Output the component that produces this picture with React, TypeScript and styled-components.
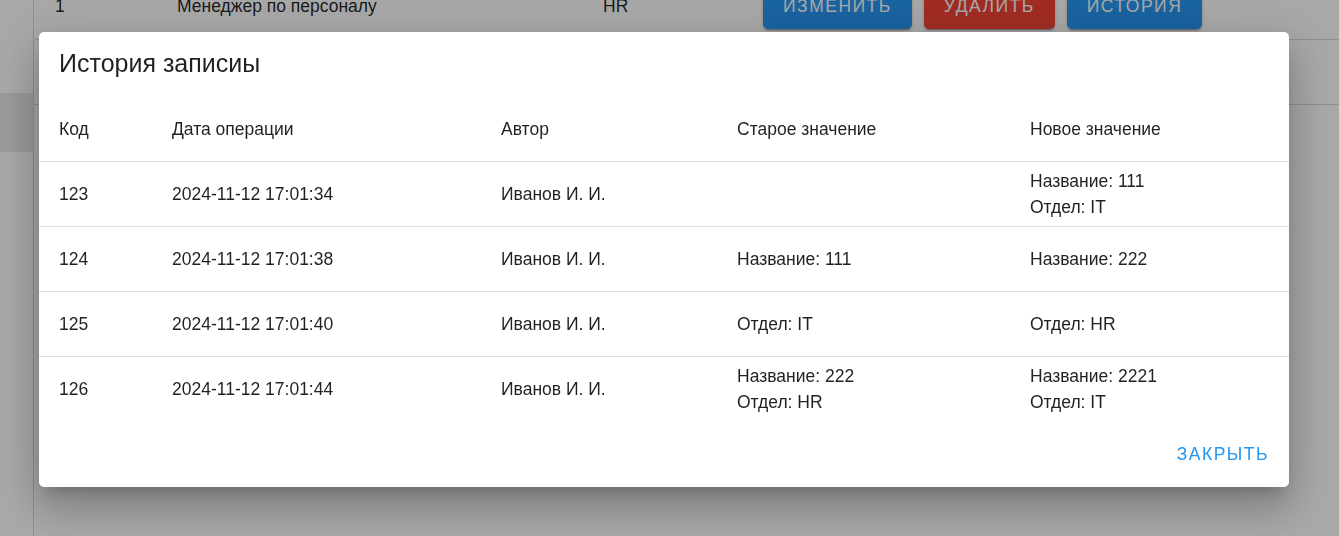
import React from 'react'
import styled, { createGlobalStyle } from 'styled-components'

const GlobalStyle = createGlobalStyle`
  html, body {
    margin: 0;
    padding: 0;
    overflow: hidden;
    background: #ffffff;
    font-family: "Liberation Sans", Arial, sans-serif;
  }
`

type Record = {
  id: number
  date: string
  author: string
  before: string[]
  after: string[]
}

const history: Record[] = [
  { id: 123, date: '2024-11-12 17:01:34', author: 'Иванов И. И.', before: [], after: ['Название: 111', 'Отдел: IT'] },
  { id: 124, date: '2024-11-12 17:01:38', author: 'Иванов И. И.', before: ['Название: 111'], after: ['Название: 222'] },
  { id: 125, date: '2024-11-12 17:01:40', author: 'Иванов И. И.', before: ['Отдел: IT'], after: ['Отдел: HR'] },
  { id: 126, date: '2024-11-12 17:01:44', author: 'Иванов И. И.', before: ['Название: 222', 'Отдел: HR'], after: ['Название: 2221', 'Отдел: IT'] },
]

const App = () => {
  return (
    <>
      <GlobalStyle />
      <Page>
        <Sidebar>
          <SideItem />
        </Sidebar>
        <Main>
          <PageTable>
            <colgroup>
              <col style={{ width: 122 }} />
              <col style={{ width: 426 }} />
              <col style={{ width: 160 }} />
              <col />
            </colgroup>
            <tbody>
              <PageRow>
                <PageCell>1</PageCell>
                <PageCell>Менеджер по персоналу</PageCell>
                <PageCell>HR</PageCell>
                <PageCell>
                  <Actions>
                    <ActionButton>Изменить</ActionButton>
                    <ActionButton danger>Удалить</ActionButton>
                    <ActionButton>История</ActionButton>
                  </Actions>
                </PageCell>
              </PageRow>
              <PageRow>
                <PageCell />
                <PageCell />
                <PageCell />
                <PageCell />
              </PageRow>
            </tbody>
          </PageTable>
        </Main>
      </Page>

      <Backdrop>
        <Dialog>
          <DialogTitle>История записиы</DialogTitle>
          <HistoryTable>
            <colgroup>
              <col style={{ width: 113 }} />
              <col style={{ width: 329 }} />
              <col style={{ width: 236 }} />
              <col style={{ width: 293 }} />
              <col />
            </colgroup>
            <thead>
              <tr>
                <HeadCell>Код</HeadCell>
                <HeadCell>Дата операции</HeadCell>
                <HeadCell>Автор</HeadCell>
                <HeadCell>Старое значение</HeadCell>
                <HeadCell>Новое значение</HeadCell>
              </tr>
            </thead>
            <tbody>
              {history.map((r) => (
                <BodyRow key={r.id}>
                  <Cell>{r.id}</Cell>
                  <Cell>{r.date}</Cell>
                  <Cell>{r.author}</Cell>
                  <Cell>
                    {r.before.map((line) => (
                      <Line key={line}>{line}</Line>
                    ))}
                  </Cell>
                  <Cell>
                    {r.after.map((line) => (
                      <Line key={line}>{line}</Line>
                    ))}
                  </Cell>
                </BodyRow>
              ))}
            </tbody>
          </HistoryTable>
          <DialogActions>
            <TextButton>Закрыть</TextButton>
          </DialogActions>
        </Dialog>
      </Backdrop>
    </>
  )
}

export default App

const Page = styled.div`
  display: flex;
  height: 100vh;
  background: #ffffff;
`

const Sidebar = styled.div`
  width: 34px;
  flex-shrink: 0;
  border-right: 1px solid #d9d9d9;
  padding-top: 93px;
  box-sizing: border-box;
`

const SideItem = styled.div`
  height: 59px;
  background: #e9e9e9;
`

const Main = styled.div`
  flex: 1;
  margin-top: -26px;
  padding-left: 1px;
`

const PageTable = styled.table`
  width: 100%;
  border-collapse: collapse;
  table-layout: fixed;
`

const PageRow = styled.tr`
  height: 65px;
`

const PageCell = styled.td`
  padding: 0 20px;
  border-bottom: 1px solid #d9d9d9;
  font-size: 17.5px;
  color: rgba(0, 0, 0, 0.87);
  vertical-align: middle;
  white-space: nowrap;
`

const Actions = styled.div`
  display: flex;
  gap: 12px;
`

const ActionButton = styled.button<{ danger?: boolean }>`
  height: 45px;
  padding: 0 20px;
  border: none;
  border-radius: 5px;
  background: ${(p) => (p.danger ? '#f44336' : '#2797f2')};
  color: #ffffff;
  font-family: "Liberation Sans", Arial, sans-serif;
  font-size: 17.5px;
  letter-spacing: 1.5px;
  text-transform: uppercase;
  box-shadow: 0 3px 1px -2px rgba(0, 0, 0, 0.2), 0 2px 2px 0 rgba(0, 0, 0, 0.14),
    0 1px 5px 0 rgba(0, 0, 0, 0.12);
`

const Backdrop = styled.div`
  position: fixed;
  inset: 0;
  background: rgba(0, 0, 0, 0.34);
  padding: 32px 0 0 39px;
  box-sizing: border-box;
`

const Dialog = styled.div`
  width: 1250px;
  background: #ffffff;
  border-radius: 5px;
  box-shadow: 0 11px 15px -7px rgba(0, 0, 0, 0.2), 0 24px 38px 3px rgba(0, 0, 0, 0.14),
    0 9px 46px 8px rgba(0, 0, 0, 0.12);
  color: rgba(0, 0, 0, 0.87);
`

const DialogTitle = styled.h2`
  margin: 0;
  padding: 11px 20px 14px;
  font-size: 25px;
  font-weight: 400;
  line-height: 40px;
`

const HistoryTable = styled.table`
  width: 100%;
  border-collapse: collapse;
  table-layout: fixed;
`

const HeadCell = styled.th`
  height: 64px;
  padding: 0 20px;
  text-align: left;
  font-size: 17.5px;
  font-weight: 400;
  line-height: 26px;
  border-bottom: 1px solid #e0e0e0;
  vertical-align: middle;
`

const BodyRow = styled.tr`
  &:last-child td {
    border-bottom: none;
  }
`

const Cell = styled.td`
  height: 64px;
  padding: 0 20px;
  font-size: 17.5px;
  line-height: 26px;
  border-bottom: 1px solid #e0e0e0;
  vertical-align: middle;
  white-space: nowrap;
`

const Line = styled.div``

const DialogActions = styled.div`
  display: flex;
  justify-content: flex-end;
  padding: 10px;
`

const TextButton = styled.button`
  height: 46px;
  padding: 0 10px;
  border: none;
  background: transparent;
  color: #2196f3;
  font-family: "Liberation Sans", Arial, sans-serif;
  font-size: 17.5px;
  letter-spacing: 1.5px;
  text-transform: uppercase;
  border-radius: 5px;
  cursor: pointer;
`
